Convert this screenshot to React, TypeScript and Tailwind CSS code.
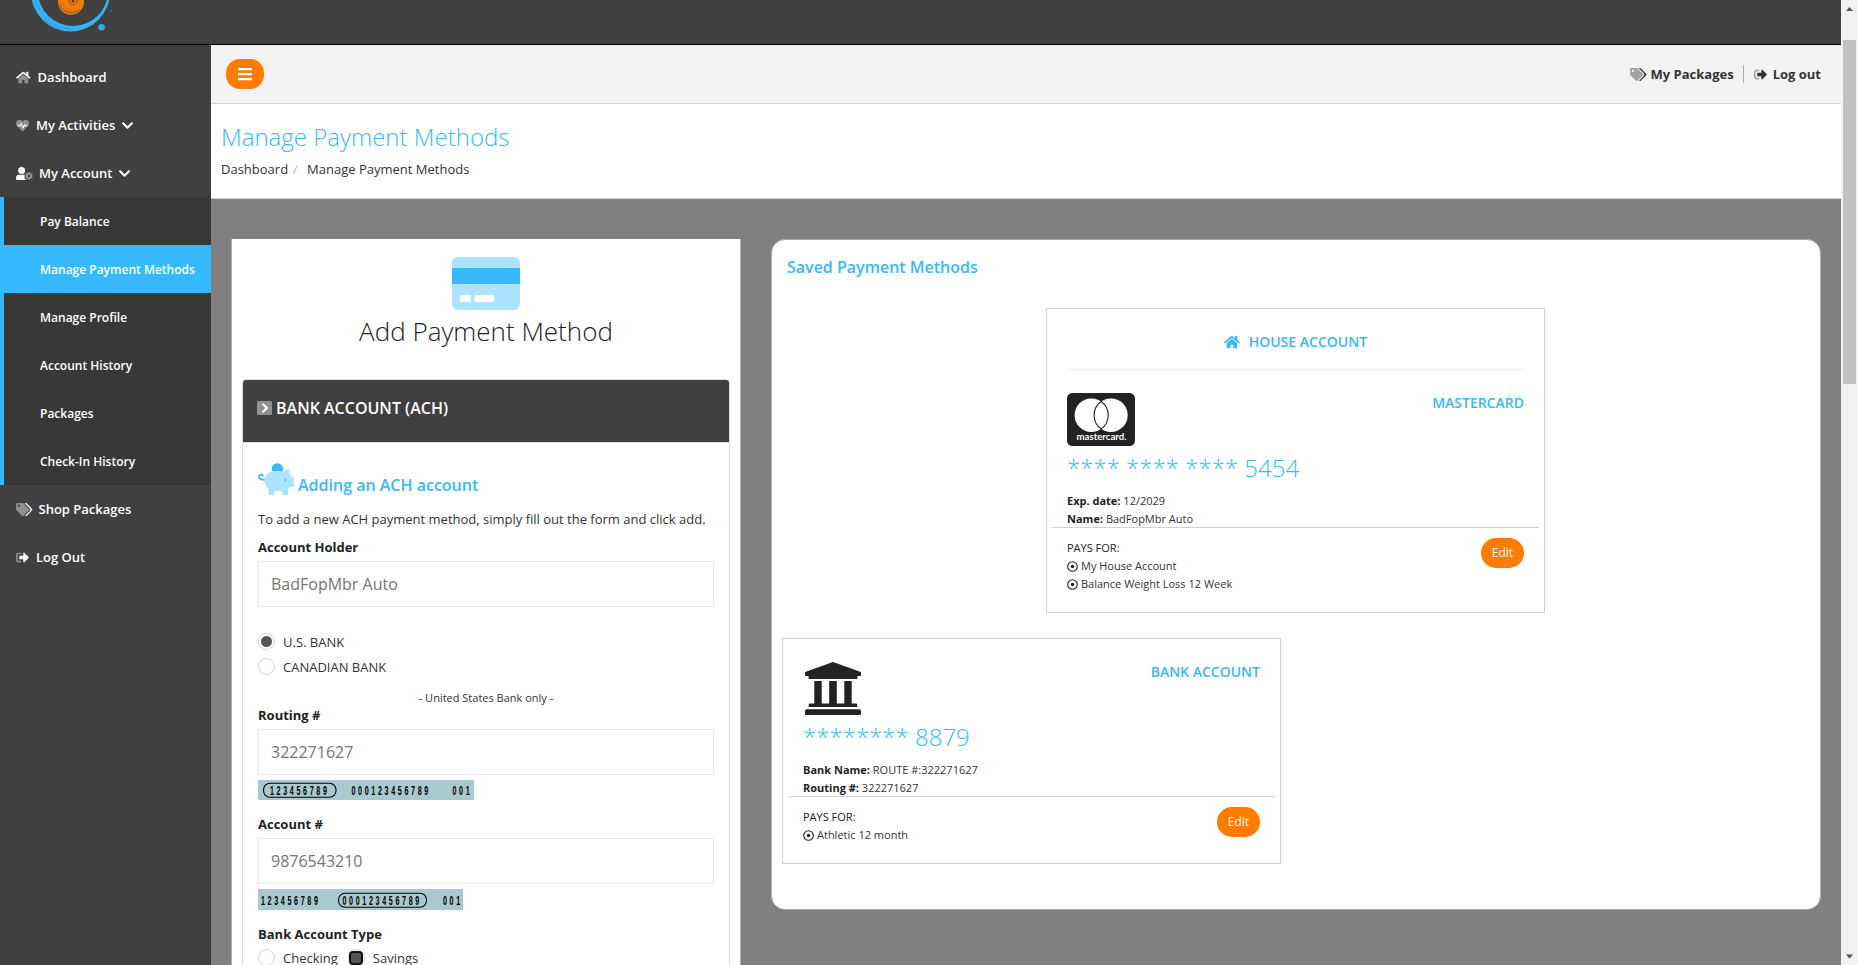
import React from "react";
import { FaBars, FaChevronDown, FaCog } from "react-icons/fa";

const HOUSE_BODY =
  "M280.37 148.26L96 300.11V464a16 16 0 0 0 16 16l112.06-.29a16 16 0 0 0 15.92-16V368a16 16 0 0 1 16-16h64a16 16 0 0 1 16 16v95.64a16 16 0 0 0 16 16.05L464 480a16 16 0 0 0 16-16V300L295.67 148.26a12.19 12.19 0 0 0-15.3 0z";
const HOUSE_ROOF =
  "M571.6 251.47L488 182.56V44.05a12 12 0 0 0-12-12h-56a12 12 0 0 0-12 12v72.61L318.47 43a48 48 0 0 0-61 0L4.34 251.47a12 12 0 0 0-1.6 16.9l25.5 31A12 12 0 0 0 45.15 301l235.22-193.74a12.19 12.19 0 0 1 15.3 0L530.9 301a12 12 0 0 0 16.9-1.6l25.5-31a12 12 0 0 0-1.7-16.93z";

function HouseIcon({ className, fade }: { className: string; fade: number }) {
  return (
    <svg viewBox="0 0 576 512" fill="currentColor" className={className}>
      <path d={HOUSE_BODY} opacity={fade} />
      <path d={HOUSE_ROOF} />
    </svg>
  );
}

function HeartPulseIcon() {
  return (
    <svg viewBox="0 0 512 512" className="h-[13px] w-[13px]">
      <path
        fill="currentColor"
        opacity={0.42}
        d="M462.3 62.6C407.500 15.900 326 24.300 275.700 76.200L256 96.500l-19.700-20.300C186.100 24.300 104.500 15.900 49.700 62.600c-62.800 53.600-66.100 149.800-9.900 207.900l193.500 199.800c12.500 12.900 32.800 12.900 45.300 0l193.500-199.800c56.300-58.100 53-154.300-9.800-207.900z"
      />
      <path d="M50 262h110l45-80 75 160 55-110 22 30h100" fill="none" stroke="currentColor" strokeWidth="40" strokeLinejoin="round" />
    </svg>
  );
}

function UserCogIcon() {
  return (
    <span className="flex h-[13px] w-[17px] items-start">
      <svg viewBox="0 0 11 13" className="h-[13px] w-[11px] shrink-0" fill="currentColor">
        <circle cx="5.600" cy="3.500" r="3.500" />
        <path d="M3.200 7.700h4.900l.5.200v4l2.400 1.100H1.200A1.200 1.200 0 0 1 0 11.800v-.9a3.200 3.200 0 0 1 3.200-3.200z" />
      </svg>
      <FaCog className="-ml-[2px] mt-[5px] h-[8px] w-[8px] shrink-0 opacity-45" />
    </span>
  );
}

function TagsIcon({ className }: { className: string }) {
  return (
    <svg viewBox="0 0 640 512" fill="currentColor" className={className}>
      <path
        opacity={0.42}
        fillRule="evenodd"
        d="M497.941 225.941L286.059 14.059A48 48 0 0 0 252.118 0H48C21.490 0 0 21.490 0 48v204.118a48 48 0 0 0 14.059 33.941l211.882 211.882c18.744 18.745 49.136 18.746 67.882 0l204.118-204.118c18.745-18.745 18.745-49.137 0-67.882zM112 160c-26.510 0-48-21.490-48-48s21.490-48 48-48 48 21.490 48 48-21.490 48-48 48z"
      />
      <path d="M625.941 293.823L421.823 497.941c-18.745 18.745-49.137 18.745-67.882 0l-.36-.36L527.640 323.522c16.999-16.999 26.360-39.600 26.360-63.640s-9.362-46.641-26.360-63.640L331.397 0h48.721a48 48 0 0 1 33.941 14.059l211.882 211.882c18.745 18.745 18.745 49.137 0 67.882z" />
    </svg>
  );
}

function SignOutIcon() {
  return (
    <svg viewBox="0 0 512 512" fill="currentColor" className="h-[13px] w-[13px]">
      <path
        opacity={0.42}
        d="M192 436v-40c0-6.600-5.400-12-12-12H96c-17.700 0-32-14.300-32-32V160c0-17.700 14.300-32 32-32h84c6.600 0 12-5.400 12-12V76c0-6.600-5.400-12-12-12H96c-53 0-96 43-96 96v192c0 53 43 96 96 96h84c6.600 0 12-5.400 12-12z"
      />
      <path d="M497 273L329 441c-15 15-41 4.500-41-17v-96H152c-13.300 0-24-10.700-24-24v-96c0-13.300 10.700-24 24-24h136V88c0-21.400 25.900-32 41-17l168 168c9.300 9.400 9.300 24.600 0 34z" />
    </svg>
  );
}

function Logo() {
  return (
    <svg viewBox="0 0 130 44" className="block h-[44px] w-[130px]">
      <path
        fillRule="evenodd"
        fill="#36b1f5"
        d="M31-8a39.500 39.500 0 1 0 79 0a39.500 39.500 0 1 0-79 0zM38-9a35 35 0 1 0 70 0a35 35 0 1 0-70 0z"
      />
      <path d="M42.500 17l4-1.500 6 6 9 4 10 1.800-8 1.800-11-2z" fill="#36b1f5" />
      <path d="M44 19l5 4 9 4 12 2" fill="none" stroke="#2f93cb" strokeWidth="1.500" opacity="0.500" />
      <path d="M35 2l4 7 3 4" fill="none" stroke="#2f93cb" strokeWidth="1" opacity="0.500" />
      <circle cx="101.600" cy="27.300" r="3.300" fill="#36a9e8" />
      <circle cx="111.500" cy="10.600" r="0.700" fill="#36a9e8" />
      <circle cx="101.500" cy="14" r="1" fill="#36a9e8" />
      <circle cx="71" cy="1.700" r="13" fill="#f07c0c" />
      <path d="M59.500 4a12 12 0 0 0 13 8.500a11 11 0 0 0 7-3" fill="none" stroke="#404040" strokeWidth="0.700" />
      <path d="M62.500 2a9 9 0 0 0 13 7" fill="none" stroke="#b8601a" strokeWidth="0.700" />
      <path d="M69.200 0a3.800 3.800 0 0 0 5 4.500a4 4 0 0 0 2.500-4.500" fill="none" stroke="#8a4a18" strokeWidth="0.900" />
      <circle cx="73" cy="1.300" r="1.300" fill="#4a3c30" />
    </svg>
  );
}

function CreditCardIcon() {
  return (
    <svg viewBox="0 0 68 53" className="h-[53px] w-[68px]">
      <rect width="68" height="53" rx="6" fill="#aee3ff" />
      <rect y="11" width="68" height="16" fill="#36b9ff" />
      <rect x="8" y="38" width="11" height="7" rx="0.500" fill="#fff" />
      <rect x="22.500" y="38" width="19.500" height="7" rx="0.500" fill="#fff" />
    </svg>
  );
}

function PiggyIcon() {
  return (
    <svg viewBox="0 0 36 32" className="h-[32px] w-[36px] shrink-0">
      <path d="M13.800 8a5.800 5.800 0 1 1 11 0z" fill="#36b9ff" />
      <path
        d="M16.500 8h8.500l1.500 .6c1-1.600 2.700-2.600 5-2.600l-.7 4.200c1.100 1 2 2.400 2.500 3.800H35.200a.8.800 0 0 1 .8.800v8a.8.800 0 0 1-.8.800H32.400c-.7 1-1.500 1.800-2.400 2.400v5.200a.8.800 0 0 1-.8.800h-4.100a.8.800 0 0 1-.8-.8v-3.200h-8v3.200a.8.800 0 0 1-.8.800h-4.200a.8.800 0 0 1-.8-.8v-5.400c-2.500-2-4-4.700-4-7.800 0-5.700 4.500-10 10-10z"
        fill="#aee3ff"
      />
      <circle cx="27.300" cy="17" r="1" fill="#36b9ff" />
      <path d="M6.700 16.600H3.800C.300 16.200 0 11.900 3.800 11.700c.9 0 1.500.7 1 1.500" fill="none" stroke="#36b9ff" strokeWidth="1.700" />
    </svg>
  );
}

function ChevronSquareIcon() {
  return (
    <svg viewBox="0 0 15 14" className="mt-[4px] h-[14px] w-[15px]">
      <rect width="15" height="14" rx="1.500" fill="#fff" opacity="0.420" />
      <path d="M5.600 2.800L9.900 7 5.600 11.200" fill="none" stroke="#fff" strokeWidth="2.300" />
    </svg>
  );
}

function MastercardIcon() {
  return (
    <svg viewBox="0 0 68 53" className="h-[53px] w-[68px]">
      <rect width="68" height="53" rx="5.500" fill="#222" />
      <circle cx="24.400" cy="22.200" r="16.800" fill="#fff" />
      <circle cx="43.900" cy="22.200" r="16.800" fill="#fff" />
      <path d="M34.150 8.500A16.800 16.800 0 0 1 34.150 35.900A16.800 16.800 0 0 1 34.150 8.500z" fill="none" stroke="#222" strokeWidth="1.100" />
      <text x="9.500" y="46.800" textLength="50" lengthAdjust="spacingAndGlyphs" fill="#fff" className="font-['Lato',sans-serif] text-[9px] font-bold">
        mastercard.
      </text>
    </svg>
  );
}

function BankIcon() {
  return (
    <svg viewBox="4 0 68 53" className="h-[53px] w-[68px]" fill="#222">
      <path d="M34 0l27.200 9.800a1.200 1.200 0 0 1 .8 1.200v2a1 1 0 0 1-1 1H58.500v1.700a1.300 1.300 0 0 1-1.300 1.300H10.800a1.300 1.300 0 0 1-1.300-1.300V14H7a1 1 0 0 1-1-1v-2a1.200 1.200 0 0 1 .8-1.200z" />
      <path d="M15.300 19h7.400v22.500h7.500V19h7.600v22.500h7.500V19h7.400v22.500h4.300a1.300 1.300 0 0 1 1.300 1.300V45H9.700v-2.200a1.300 1.300 0 0 1 1.300-1.300h4.300z" />
      <path d="M8 47.200h52a2 2 0 0 1 2 2V52a1 1 0 0 1-1 1H7a1 1 0 0 1-1-1v-2.800a2 2 0 0 1 2-2z" />
    </svg>
  );
}

function DotCircleIcon() {
  return (
    <svg viewBox="0 0 11 11" className="h-[11px] w-[11px]">
      <circle cx="5.500" cy="5.500" r="4.800" fill="none" stroke="#222" strokeWidth="1.100" />
      <circle cx="5.500" cy="5.500" r="1.700" fill="#222" />
    </svg>
  );
}

function Micr({ width, height, baseline, groups, pill }: { width: number; height: number; baseline: number; groups: [number, string][]; pill: [number, number] }) {
  return (
    <svg width={width} height={height} className="mt-[5px] block bg-[#aac8d0]">
      <rect x={pill[0]} y={baseline - 11.5} width={pill[1]} height="14" rx="6.500" fill="none" stroke="#000" strokeWidth="1.100" />
      {groups.map(([x, digits]) => (
        <text
          key={x}
          transform={`translate(${x} ${baseline}) scale(0.55 1)`}
          className="font-['Liberation_Sans',sans-serif] text-[13px] font-bold tracking-[4.800px]"
        >
          {digits}
        </text>
      ))}
    </svg>
  );
}

function TextField({ label, value, className }: { label: string; value: string; className: string }) {
  return (
    <div className={className}>
      <label className="block text-[13px] font-bold leading-[18px]">{label}</label>
      <div className="mt-[5px] flex h-[46px] items-center rounded-[1px] border border-[#e5e6e7] pl-[12px] text-[16px] leading-[22px] text-[#757575]">{value}</div>
    </div>
  );
}

function Radio({ label, state }: { label: string; state: "off" | "on" | "focus" }) {
  return (
    <label className="flex h-[18px] items-start">
      <span className="flex size-[17px] items-center justify-center rounded-full border border-[#d2d2d2]">
        {state === "on" && <span className="size-[11px] rounded-full bg-[#555]" />}
        {state === "focus" && <span className="size-[14px] shrink-0 rounded-[4px] border-2 border-[#111] bg-[#555]" />}
      </span>
      <span className="ml-[8px] text-[13px] leading-[18px] text-[#333]">{label}</span>
    </label>
  );
}

const topItem = "flex h-[48px] items-center gap-[6px] pl-[16px] text-[13px] font-semibold text-white";
const subItems = ["Pay Balance", "Manage Payment Methods", "Manage Profile", "Account History", "Packages", "Check-In History"];

function Sidebar() {
  return (
    <nav className="w-[211px] shrink-0 bg-[#404040] pt-[8px]">
      <a className={topItem}>
        <HouseIcon className="h-[13px] w-[14.600px]" fade={0.42} />
        <span className="pl-[1px] pt-[1px]">Dashboard</span>
      </a>
      <a className={topItem}>
        <HeartPulseIcon />
        <span className="pl-[1px] pt-[1px]">My Activities</span>
        <FaChevronDown className="size-[13px]" />
      </a>
      <a className={topItem}>
        <UserCogIcon />
        <span className="pt-[1px]">My Account</span>
        <FaChevronDown className="size-[13px]" />
      </a>
      <div className="border-l-4 border-[#36b9ff] bg-[#383838]">
        {subItems.map((item) => (
          <a
            key={item}
            className={
              item === "Manage Payment Methods"
                ? "flex h-[48px] items-center bg-[#36b9ff] pl-[36px] pt-[2px] text-[12px] font-semibold text-white"
                : "flex h-[48px] items-center pl-[36px] pt-[2px] text-[12px] font-semibold text-white"
            }
          >
            {item}
          </a>
        ))}
      </div>
      <a className={topItem}>
        <TagsIcon className="h-[13px] w-[16.500px]" />
        <span className="pt-[1px]">Shop Packages</span>
      </a>
      <a className={topItem}>
        <SignOutIcon />
        <span className="pl-[1px] pt-[1px]">Log Out</span>
      </a>
    </nav>
  );
}

function AddPayment() {
  return (
    <section className="h-[800px] w-[510px] border-x border-[#a9acaf] bg-white px-[10px] pt-[18px]">
      <div className="flex justify-center">
        <CreditCardIcon />
      </div>
      <h2 className="mt-[3px] text-center text-[26px] font-light leading-[36px]">Add Payment Method</h2>
      <div className="mt-[30px] h-[700px] rounded-t-[3px] border border-[#ddd]">
        <div className="flex h-[63px] items-start gap-[4px] rounded-t-[3px] border-b border-[#ddd] bg-[#404040] bg-clip-padding pl-[14px] pt-[17px] text-[16px] font-semibold leading-[22px] text-white">
          <ChevronSquareIcon />
          BANK ACCOUNT (ACH)
        </div>
        <div className="px-[15px] pt-[20px]">
          <div className="flex h-[32px] items-start gap-[4px]">
            <PiggyIcon />
            <h3 className="mt-[11px] text-[16px] font-semibold leading-[22px] text-[#36b9ff]">Adding an ACH account</h3>
          </div>
          <p className="mt-[15px] whitespace-nowrap text-[13px] leading-[18px] text-[#333]">To add a new ACH payment method, simply fill out the form and click add.</p>
          <TextField className="mt-[10px]" label="Account Holder" value="BadFopMbr Auto" />
          <div className="mt-[26px] flex flex-col gap-[7px]">
            <Radio label="U.S. BANK" state="on" />
            <Radio label="CANADIAN BANK" state="off" />
          </div>
          <p className="mt-[14px] text-center text-[11px] leading-[15px] text-[#333]">- United States Bank only -</p>
          <TextField className="mt-[1px]" label="Routing #" value="322271627" />
          <Micr width={216} height={20} baseline={14.8} pill={[5.5, 72.5]} groups={[[12, "123456789"], [93.5, "000123456789"], [194.5, "001"]]} />
          <TextField className="mt-[15px]" label="Account #" value="9876543210" />
          <Micr width={205} height={21} baseline={15.8} pill={[80.5, 88]} groups={[[3, "123456789"], [84.5, "000123456789"], [185, "001"]]} />
          <div className="mt-[15px] text-[13px] font-bold leading-[18px]">Bank Account Type</div>
          <div className="mt-[6px] flex gap-[10px]">
            <Radio label="Checking" state="off" />
            <Radio label="Savings" state="focus" />
          </div>
        </div>
      </div>
    </section>
  );
}

type Saved = {
  heading?: string;
  icon: React.ReactNode;
  kind: string;
  number: string;
  details: [string, string][];
  pays: string[];
  className: string;
};

function SavedCard({ heading, icon, kind, number, details, pays, className }: Saved) {
  return (
    <article className={className}>
      {heading && (
        <>
          <div className="flex items-center justify-center gap-[9px] text-[14px] font-semibold leading-[19px] text-[#36b9ff]">
            <HouseIcon className="h-[14px] w-[15.750px]" fade={1} />
            {heading}
          </div>
          <div className="mb-[23px] mt-[18px] h-px bg-[#eee]" />
        </>
      )}
      <div className="flex items-start justify-between">
        {icon}
        <span className="text-[14px] font-semibold leading-[19px] text-[#36b9ff]">{kind}</span>
      </div>
      <div className="mt-[5px] text-[24px] font-light leading-[33px] text-[#36b9ff]">{number}</div>
      <dl className="mt-[8px] h-[35px] text-[11px] leading-[18px]">
        {details.map(([k, v]) => (
          <div key={k}>
            <dt className="inline font-bold">{k}</dt> <dd className="inline text-[#333]">{v}</dd>
          </div>
        ))}
      </dl>
      <div className="-mx-[15px] h-px bg-[#d0d3d6]" />
      <div className="mt-[10px] flex items-start justify-between text-[11px] leading-[18px]">
        <div className="pt-[1px]">
          <div className="font-medium">PAYS FOR:</div>
          {pays.map((p) => (
            <div key={p} className="flex items-center gap-[3px] text-[#333]">
              <DotCircleIcon />
              {p}
            </div>
          ))}
        </div>
        <button className="h-[30px] w-[43px] rounded-[15px] bg-[#ff7c00] text-[12px] font-medium text-white">Edit</button>
      </div>
    </article>
  );
}

function SavedMethods() {
  return (
    <section className="h-[671px] w-[1050px] rounded-[14px] border border-[#a9acaf] bg-white px-[10px] pt-[16px]">
      <h3 className="pl-[5px] text-[16px] font-semibold leading-[22px] text-[#36b9ff]">Saved Payment Methods</h3>
      <SavedCard
        className="ml-[264px] mt-[30px] h-[305px] w-[499px] border border-[#d0d3d6] px-[20px] pt-[23px]"
        heading="HOUSE ACCOUNT"
        icon={<MastercardIcon />}
        kind="MASTERCARD"
        number="**** **** **** 5454"
        details={[["Exp. date:", "12/2029"], ["Name:", "BadFopMbr Auto"]]}
        pays={["My House Account", "Balance Weight Loss 12 Week"]}
      />
      <SavedCard
        className="mt-[25px] h-[226px] w-[499px] border border-[#d0d3d6] px-[20px] pt-[23px]"
        icon={<BankIcon />}
        kind="BANK ACCOUNT"
        number="******** 8879"
        details={[["Bank Name:", "ROUTE #:322271627"], ["Routing #:", "322271627"]]}
        pays={["Athletic 12 month"]}
      />
    </section>
  );
}

function Scrollbar() {
  return (
    <div className="flex w-[17px] shrink-0 flex-col items-center justify-between bg-[#f1f1f1]">
      <div className="flex flex-col items-center">
        <svg viewBox="0 0 17 40" className="block h-[40px] w-[17px]">
          <path d="M5 11h7L8.500 7z" fill="#505050" />
        </svg>
        <div className="h-[344px] w-[13px] bg-[#c1c1c1]" />
      </div>
      <svg viewBox="0 0 17 17" className="block size-[17px]">
        <path d="M5 6.500h7L8.500 10.500z" fill="#505050" />
      </svg>
    </div>
  );
}

export default function App() {
  return (
    <div className="flex h-[965px] w-[1858px] overflow-hidden font-['Open_Sans',sans-serif] text-[#222]">
      <div className="flex min-w-0 flex-1 flex-col">
        <header className="h-[45px] shrink-0 border-b border-black bg-[#404040]">
          <Logo />
        </header>
        <div className="flex min-h-0 flex-1">
          <Sidebar />
          <main className="flex min-w-0 flex-1 flex-col bg-[#808080]">
            <div className="flex h-[59px] shrink-0 items-center justify-between border-b border-[#d2d2d2] bg-[#f3f3f3] pl-[15px] pr-[20px]">
              <button className="flex h-[30px] w-[38px] items-center justify-center rounded-[14px] bg-[#ff7c00] text-white">
                <FaBars className="size-[16px]" />
              </button>
              <div className="flex items-center text-[13px] font-bold leading-[18px] text-[#333]">
                <TagsIcon className="mr-[4px] h-[13px] w-[16.500px]" />
                My Packages
                <span className="ml-[9px] mr-[10px] h-[18px] w-px bg-[#aaa]" />
                <SignOutIcon />
                <span className="ml-[6px]">Log out</span>
              </div>
            </div>
            <div className="h-[95px] shrink-0 border-b border-[#d2d2d2] bg-white pl-[10px] pt-[16px]">
              <h1 className="text-[24px] font-light leading-[33px] text-[#36b9ff]">Manage Payment Methods</h1>
              <div className="mt-[7px] flex text-[13px] leading-[18px] text-[#333]">
                <span>Dashboard</span>
                <span className="ml-[5px] w-[14px] text-[#bbb]">/</span>
                <span>Manage Payment Methods</span>
              </div>
            </div>
            <div className="flex min-h-0 flex-1 items-start gap-[30px] overflow-hidden pl-[20px] pt-[40px]">
              <AddPayment />
              <SavedMethods />
            </div>
          </main>
        </div>
      </div>
      <Scrollbar />
    </div>
  );
}
